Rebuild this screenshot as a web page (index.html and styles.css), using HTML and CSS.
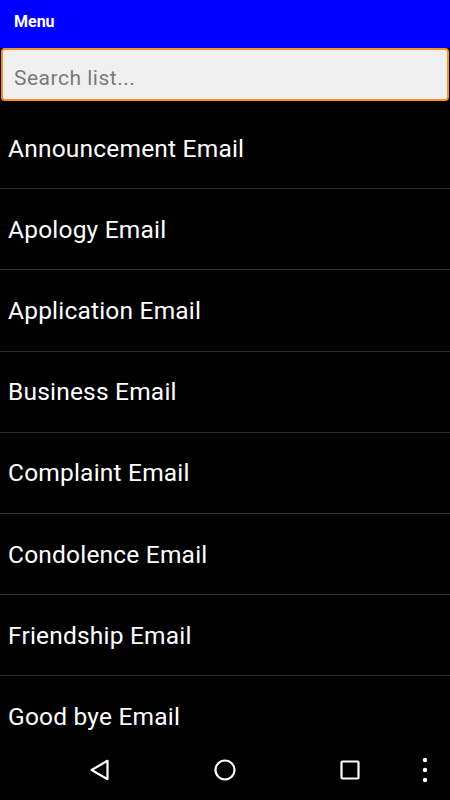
FILE: index.html
```html
<!DOCTYPE html>
<html>
<head>
<meta charset="utf-8">
<link rel="stylesheet" href="styles.css">
</head>
<body>
<div class="app">
  <header class="appbar">Menu</header>
  <div class="search-wrap">
    <input class="search" type="text" placeholder="Search list...">
  </div>
  <ul class="list">
    <li class="row">Announcement Email</li>
    <li class="row">Apology Email</li>
    <li class="row">Application Email</li>
    <li class="row">Business Email</li>
    <li class="row">Complaint Email</li>
    <li class="row">Condolence Email</li>
    <li class="row">Friendship Email</li>
    <li class="row">Good bye Email</li>
  </ul>
  <nav class="navbar">
    <svg class="nav-icon" width="24" height="24" viewBox="0 0 24 24"><path d="M19.5 2.8 L19.5 21.2 L3.6 12 Z" fill="none" stroke="#fff" stroke-width="2.2" stroke-linejoin="round"/></svg>
    <svg class="nav-icon" width="24" height="24" viewBox="0 0 24 24"><circle cx="12" cy="12" r="9.5" fill="none" stroke="#fff" stroke-width="2.2"/></svg>
    <svg class="nav-icon" width="24" height="24" viewBox="0 0 24 24"><rect x="3.5" y="3.5" width="17" height="17" rx="1" fill="none" stroke="#fff" stroke-width="2.2"/></svg>
    <svg class="nav-icon more" width="8" height="26" viewBox="0 0 8 26"><circle cx="4" cy="3" r="2.2" fill="#fff"/><circle cx="4" cy="13" r="2.2" fill="#fff"/><circle cx="4" cy="23" r="2.2" fill="#fff"/></svg>
  </nav>
</div>
</body>
</html>
```

FILE: styles.css
```css
* { box-sizing: border-box; }
html, body {
  margin: 0;
  padding: 0;
  background: #000;
  font-family: Roboto, "Noto Sans", sans-serif;
}
.app {
  width: 450px;
  height: 800px;
  overflow: hidden;
  position: relative;
  background: #000;
}
.appbar {
  height: 48px;
  background: #0000ff;
  color: #fff;
  font-weight: 700;
  font-size: 16px;
  line-height: 44px;
  padding-left: 14px;
}
.search-wrap {
  padding: 0 1px;
}
.search {
  display: block;
  width: 100%;
  height: 53px;
  margin: 0;
  border: 2px solid #f7901e;
  border-radius: 4px;
  background: #f0f0f0;
  font-family: Roboto, "Noto Sans", sans-serif;
  font-size: 21px;
  letter-spacing: 0.5px;
  color: #333;
  padding: 6px 0 0 11px;
  outline: none;
}
.search::placeholder {
  color: #7a7a7a;
}
.list {
  list-style: none;
  margin: 0;
  padding: 7px 0 0 0;
}
.row {
  height: 81.2px;
  border-bottom: 1px solid #2e2e2e;
  color: #fff;
  font-size: 24.5px;
  letter-spacing: 0.2px;
  display: flex;
  align-items: center;
  padding-left: 8px;
}
.navbar {
  position: absolute;
  left: 0;
  right: 0;
  bottom: 0;
  height: 60px;
  background: #000;
  display: flex;
  align-items: center;
  padding-left: 88px;
  gap: 101px;
}
.nav-icon {
  flex: none;
}
.more {
  margin-left: -42px;
}
```
